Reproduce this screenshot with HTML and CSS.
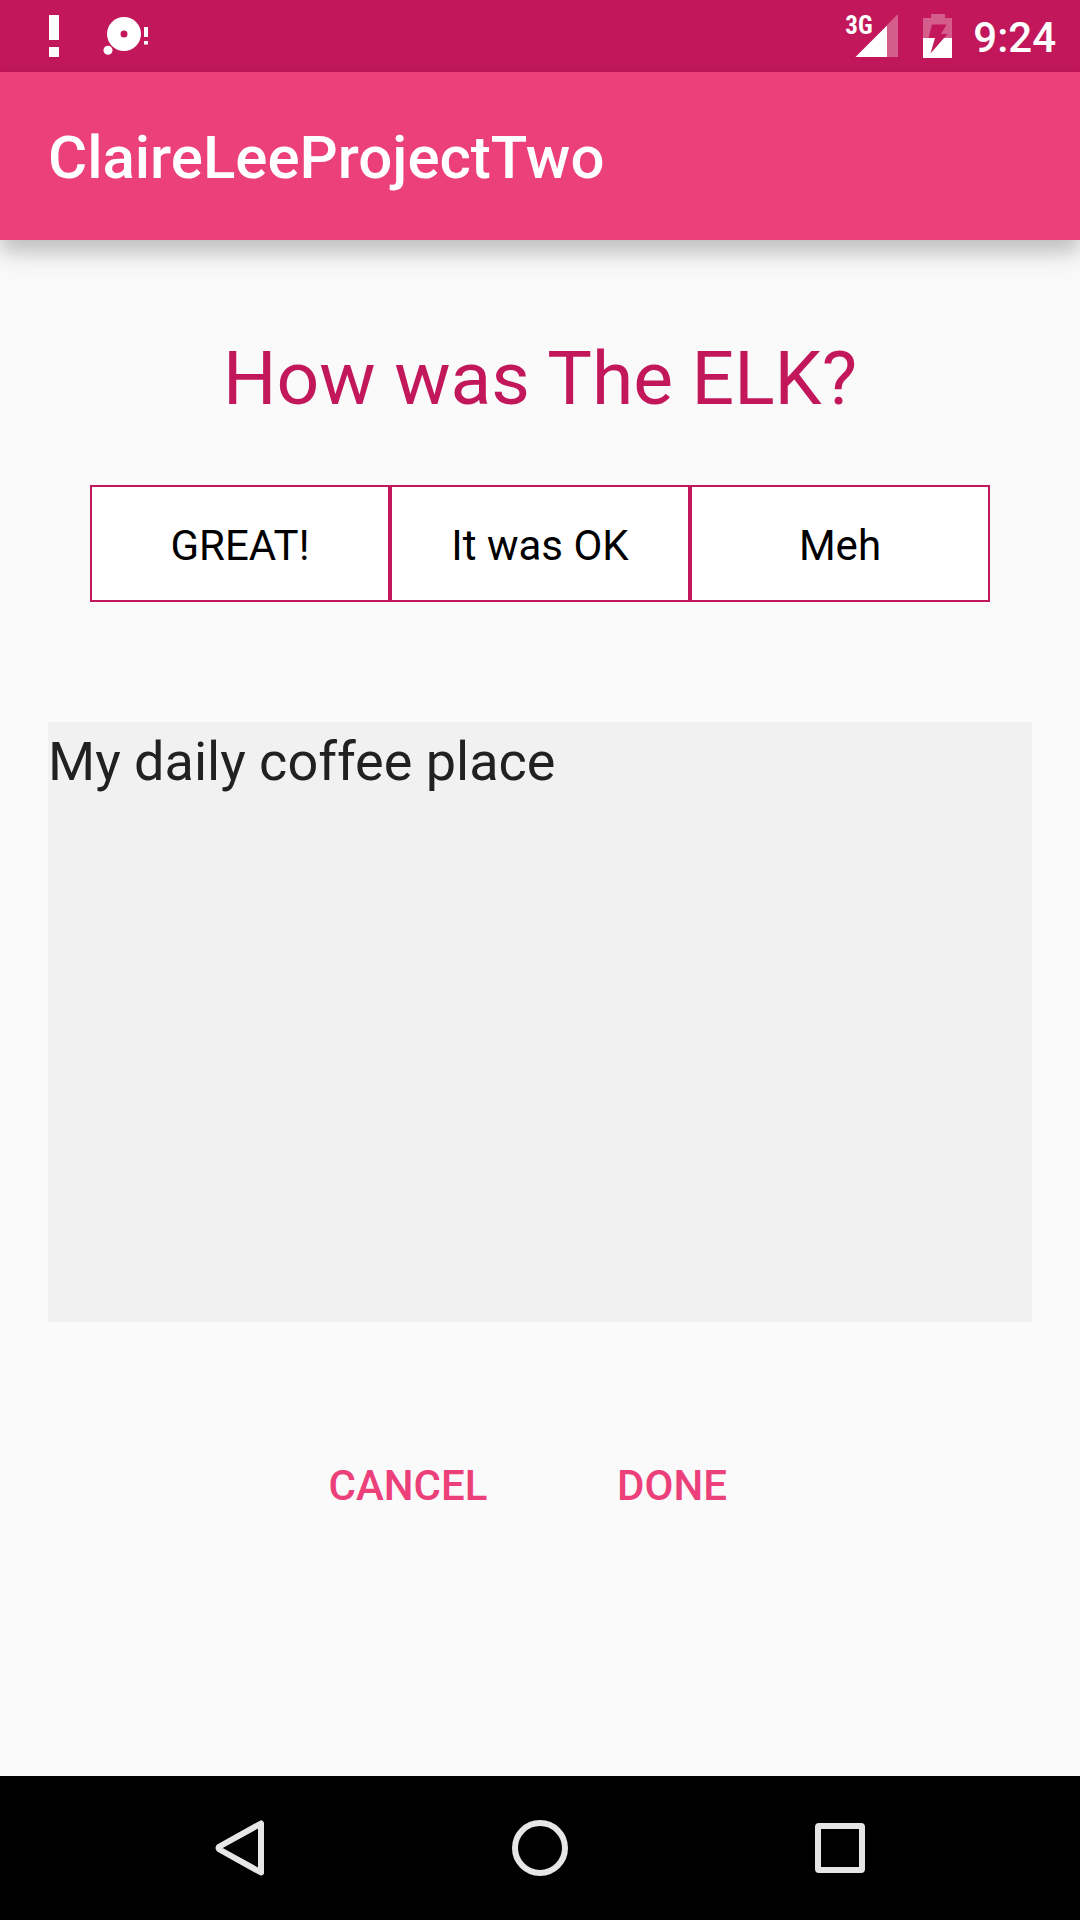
FILE: index.html
```html
<!DOCTYPE html>
<html lang="en">
<head>
  <meta charset="utf-8">
  <meta name="viewport" content="width=device-width, initial-scale=1">
  <title>ClaireLeeProjectTwo</title>
  <link rel="stylesheet" href="styles.css">
</head>
<body>
  <div class="status-bar">
    <div class="status-group">
      <svg class="status-icon" viewBox="0 0 72 72" aria-hidden="true">
        <path d="M31 15h10v25H31zM31 47h10v10H31z"/>
      </svg>
      <svg class="status-icon" viewBox="0 0 72 72" aria-hidden="true">
        <path fill-rule="evenodd" d="M34 17a17 17 0 1 0 0 34a17 17 0 1 0 0-34zM34 30.5a3.5 3.5 0 1 1 0 7a3.5 3.5 0 1 1 0-7z"/>
        <circle cx="18" cy="50.300" r="4.500"/>
        <path d="M54 27h4v10h-4zM54 41h4v3.500h-4z"/>
      </svg>
    </div>
    <div class="status-group">
      <div class="signal">
        <svg class="signal-icon" viewBox="0 0 54 72" aria-hidden="true">
          <path class="dim" d="M41 25L52 14v43H41z"/>
          <path d="M9.500 57L41 25.500V57z"/>
        </svg>
        <span class="signal-type">3G</span>
      </div>
      <svg class="battery-icon" viewBox="0 0 54 72" aria-hidden="true">
        <path class="dim" d="M20 14h14v4h7v20H12V18h8z"/>
        <path d="M12 38h29v20H12z"/>
        <path class="bolt" d="M21 24.500h14.500l-5.500 9.500h6.500L19.500 53.500l4.500-15.500h-6.500z"/>
      </svg>
      <time class="clock">9:24</time>
    </div>
  </div>

  <header class="app-bar">
    <h1 class="app-title">ClaireLeeProjectTwo</h1>
  </header>

  <main class="content">
    <form class="review">
      <h2 class="question" id="question">How was The ELK?</h2>
      <div class="ratings" role="radiogroup" aria-labelledby="question">
        <label class="rating"><input class="rating-input" type="radio" name="rating" value="great">GREAT!</label>
        <label class="rating"><input class="rating-input" type="radio" name="rating" value="ok">It was OK</label>
        <label class="rating"><input class="rating-input" type="radio" name="rating" value="meh">Meh</label>
      </div>
      <textarea class="notes" aria-label="Notes" spellcheck="false">My daily coffee place</textarea>
      <div class="actions">
        <button class="action" type="reset">CANCEL</button>
        <button class="action" type="button">DONE</button>
      </div>
    </form>
  </main>

  <nav class="nav-bar" aria-label="System">
    <button class="nav-button" type="button" aria-label="Back">
      <svg class="nav-icon" viewBox="0 0 72 72" aria-hidden="true">
        <path d="M57 11.500V60.500L15.500 37.500Q13.500 36 15.500 34.500z"/>
      </svg>
    </button>
    <button class="nav-button" type="button" aria-label="Home">
      <svg class="nav-icon" viewBox="0 0 72 72" aria-hidden="true">
        <circle cx="36" cy="36" r="25"/>
      </svg>
    </button>
    <button class="nav-button" type="button" aria-label="Recent apps">
      <svg class="nav-icon" viewBox="0 0 72 72" aria-hidden="true">
        <rect x="14" y="14" width="44" height="44" rx="1"/>
      </svg>
    </button>
  </nav>
</body>
</html>
```
FILE: styles.css
```css
:root {
  --primary: #ec407a;
  --primary-dark: #c2185b;
}

* {
  box-sizing: border-box;
}

body {
  margin: 0;
  min-height: 100vh;
  display: flex;
  flex-direction: column;
  background: #fafafa;
  font-family: Roboto, "Liberation Sans", sans-serif;
}

.status-bar {
  display: flex;
  justify-content: space-between;
  height: 72px;
  padding: 0 24px 0 18px;
  background: var(--primary-dark);
  color: #fff;
}

.status-group {
  display: flex;
  align-items: center;
}

.status-icon {
  width: 72px;
  height: 72px;
  fill: #fff;
}

.signal {
  position: relative;
  height: 72px;
  margin-right: 11px;
}

.signal-icon,
.battery-icon {
  display: block;
  width: 54px;
  height: 72px;
  fill: #fff;
}

.battery-icon {
  margin-right: 8px;
}

.dim {
  fill-opacity: 0.3;
}

.bolt {
  fill: var(--primary-dark);
}

.signal-type {
  position: absolute;
  top: 12px;
  left: -1px;
  font-family: "Roboto Condensed", Roboto, sans-serif;
  font-size: 25px;
  font-weight: 700;
  line-height: 28px;
}

.clock {
  padding-top: 4px;
  font-size: 42px;
  font-weight: 500;
  line-height: 48px;
}

.app-bar {
  display: flex;
  align-items: center;
  height: 168px;
  padding: 4px 48px 0;
  background: var(--primary);
  box-shadow: 0 12px 16px rgba(0, 0, 0, 0.14), 0 12px 32px rgba(0, 0, 0, 0.12);
}

.app-title {
  margin: 0;
  color: #fff;
  font-size: 60px;
  font-weight: 500;
  line-height: 70px;
}

.content {
  flex: 1;
  padding: 94px 48px 0;
}

.question {
  margin: 0 0 62px;
  color: var(--primary-dark);
  font-size: 75px;
  font-weight: 400;
  line-height: 89px;
  text-align: center;
}

.ratings {
  display: flex;
  margin: 0 42px 120px;
}

.rating {
  flex: 1;
  padding: 34px 0 30px;
  border: 2px solid var(--primary-dark);
  background: #fff;
  color: #000;
  font-size: 42px;
  line-height: 49px;
  text-align: center;
}

.rating-input {
  position: absolute;
  opacity: 0;
}

.notes {
  display: block;
  width: 100%;
  height: 600px;
  padding: 8px 0;
  border: 0;
  outline: 0;
  resize: none;
  background: #f1f1f1;
  color: #212121;
  font-family: inherit;
  font-size: 54px;
  line-height: 64px;
}

.actions {
  display: flex;
  justify-content: center;
  margin-top: 91px;
}

.action {
  min-width: 264px;
  height: 144px;
  padding: 0;
  border: 0;
  background: none;
  color: var(--primary);
  font-family: inherit;
  font-size: 42px;
  font-weight: 500;
  line-height: 49px;
}

.nav-bar {
  display: flex;
  justify-content: center;
  gap: 60px;
  height: 144px;
  background: #000;
}

.nav-button {
  display: flex;
  align-items: center;
  justify-content: center;
  width: 240px;
  padding: 0;
  border: 0;
  background: none;
}

.nav-icon {
  width: 72px;
  height: 72px;
  fill: none;
  stroke: #e6e6e6;
  stroke-width: 6px;
  stroke-linejoin: round;
}
```
